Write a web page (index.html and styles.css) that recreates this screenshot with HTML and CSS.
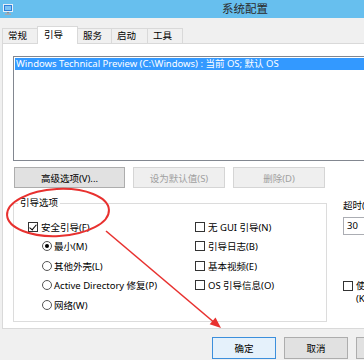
FILE: index.html
```html
<!DOCTYPE html>
<html lang="zh-CN">
<head>
    <meta charset="UTF-8" />
    <title>系统配置</title>
    <link rel="stylesheet" href="styles.css">
</head>
<body>
    <div class="window">
        <div class="titlebar">
            <svg class="app_icon" viewBox="0 0 10 11">
                <rect x="0.5" y="0.5" width="9" height="7" fill="#2f7fd8" stroke="#e8eef6" />
                <rect x="2" y="2" width="6" height="4" fill="#7cc3f5" />
                <rect x="4" y="8" width="2" height="1.5" fill="#8a8f96" />
                <rect x="2" y="9.5" width="6" height="1.5" fill="#a4a9b0" />
            </svg>
            <span class="title">系统配置</span>
        </div>

        <div class="tabs">
            <div class="tab w35">常规</div>
            <div class="tab active">引导</div>
            <div class="tab w34">服务</div>
            <div class="tab w36">启动</div>
            <div class="tab w35">工具</div>
        </div>

        <div class="panel">
            <div class="listbox">
                <div class="list_item selected">Windows Technical Preview (C:\Windows) : 当前 OS; 默认 OS</div>
            </div>

            <div class="button_row">
                <button class="btn btn_wide">高级选项(V)...</button>
                <button class="btn" disabled>设为默认值(S)</button>
                <button class="btn" disabled>删除(D)</button>
            </div>

            <div class="lower">
                <fieldset class="group">
                    <legend>引导选项</legend>
                    <div class="group_cols">
                        <div class="col">
                            <div class="row"><span class="check checked"></span>安全引导(F)</div>
                            <div class="row sub"><span class="radio on"></span>最小(M)</div>
                            <div class="row sub"><span class="radio"></span>其他外壳(L)</div>
                            <div class="row sub"><span class="radio"></span>Active Directory 修复(P)</div>
                            <div class="row sub"><span class="radio"></span>网络(W)</div>
                        </div>
                        <div class="col col_right">
                            <div class="row"><span class="check"></span>无 GUI 引导(N)</div>
                            <div class="row"><span class="check"></span>引导日志(B)</div>
                            <div class="row"><span class="check"></span>基本视频(E)</div>
                            <div class="row"><span class="check"></span>OS 引导信息(O)</div>
                        </div>
                    </div>
                </fieldset>

                <div class="side">
                    <div class="side_label">超时(T):</div>
                    <div class="timeout">
                        <span class="input">30</span>
                        <span>秒</span>
                    </div>
                    <div class="perm">
                        <span class="check"></span>
                        <span>使所有引导设置成为永久设置<br>(K)</span>
                    </div>
                </div>
            </div>
        </div>

        <div class="footer">
            <button class="btn btn_foot btn_default">确定</button>
            <button class="btn btn_foot">取消</button>
            <button class="btn btn_foot">应用(A)</button>
            <button class="btn btn_foot">帮助</button>
        </div>

        <!-- red annotation drawn over the dialog -->
        <svg class="annot" width="364" height="360" viewBox="0 0 364 360">
            <ellipse cx="58" cy="212.5" rx="51" ry="23.5" transform="rotate(-3 58 212.5)" fill="none" stroke="#e8312f" stroke-width="2" />
            <line x1="106" y1="231" x2="216" y2="324" stroke="#e8312f" stroke-width="1.6" />
            <polygon points="221,328 209.7,324.3 215.5,317.5" fill="#e8312f" />
        </svg>
    </div>
</body>
</html>
```

FILE: styles.css
```css
/* reset */
* {
    margin: 0;
    padding: 0;
    box-sizing: border-box;
}

body {
    width: 364px;
    height: 360px;
    overflow: hidden;
    background: #f0f0f0;
    font-family: "Noto Sans", "Noto Sans CJK SC", sans-serif;
    font-size: 9.5px;
    color: #000;
}

.window {
    position: relative;
    width: 500px;
}

/* title bar */
.titlebar {
    height: 18px;
    background: #67bfee;
    display: flex;
    align-items: center;
    padding-left: 3px;
}

.app_icon {
    width: 10px;
    height: 11px;
}

.title {
    flex: 1;
    text-align: center;
    font-size: 11.5px;
    line-height: 18px;
    color: #2b2b2b;
    padding-right: 23px;
}

/* tabs */
.tabs {
    display: flex;
    align-items: flex-end;
    height: 25px;
    padding-left: 2px;
}

.tab {
    height: 15px;
    border: 1px solid #d9d9d9;
    border-bottom: none;
    background: #f0f0f0;
    margin-right: -1px;
    line-height: 14px;
    padding-left: 5px;
}

.tab.w34 { width: 35px; }
.tab.w35 { width: 36px; }
.tab.w36 { width: 37px; }

.tab.active {
    width: 41px;
    height: 18px;
    background: #fff;
    margin-bottom: -1px;
    position: relative;
    z-index: 1;
    line-height: 15px;
    padding-left: 6px;
}

/* tab page */
.panel {
    margin: 0 2px;
    height: 286px;
    background: #fff;
    border: 1px solid #d9d9d9;
    padding: 12px 0 0 10px;
}

.listbox {
    width: 480px;
    height: 105px;
    border: 1px solid #828790;
    padding: 1px;
}

.list_item {
    height: 12px;
    line-height: 12px;
    padding-left: 1px;
    white-space: nowrap;
}

.list_item.selected {
    background: #3399ff;
    color: #fff;
}

.button_row {
    display: flex;
    gap: 8px;
    margin-top: 6px;
    padding-left: 1px;
}

.btn {
    height: 21px;
    width: 92px;
    border: 1px solid #adadad;
    background: #e1e1e1;
    font-family: inherit;
    font-size: 9.5px;
    color: #000;
}

.btn_wide {
    width: 111px;
}

.btn:disabled {
    border-color: #d5d5d5;
    background: #efefef;
    color: #a0a0a0;
}

/* boot options */
.lower {
    display: flex;
    margin-top: 8px;
}

.group {
    width: 314px;
    flex-shrink: 0;
    border: 1px solid #dcdcdc;
    padding: 7px 0 6px 4px;
    min-width: 0;
}

.group legend {
    padding: 0 2px;
    line-height: 14px;
}

.group_cols {
    display: flex;
}

.col {
    width: 177px;
    flex-shrink: 0;
    padding-left: 10px;
}

.col_right {
    width: auto;
    flex: 1;
    padding-left: 0;
}

.row {
    height: 19.5px;
    display: flex;
    align-items: center;
    gap: 3px;
    white-space: nowrap;
}

.row.sub {
    padding-left: 14px;
    gap: 2px;
}

.check {
    width: 10px;
    height: 10px;
    border: 1px solid #333;
    background: #fff;
    display: flex;
    justify-content: center;
    flex-shrink: 0;
}

.check.checked::after {
    content: '';
    width: 3px;
    height: 6px;
    border-right: 1.5px solid #000;
    border-bottom: 1.5px solid #000;
    transform: rotate(40deg);
}

.radio {
    width: 10px;
    height: 10px;
    border: 1px solid #555;
    border-radius: 50%;
    background: #fff;
    display: flex;
    justify-content: center;
    align-items: center;
    flex-shrink: 0;
}

.radio.on::after {
    content: '';
    width: 4px;
    height: 4px;
    border-radius: 50%;
    background: #000;
}

/* timeout column */
.side {
    margin-left: 16px;
    padding-top: 3px;
}

.side_label {
    line-height: 13px;
}

.timeout {
    display: flex;
    align-items: center;
    gap: 5px;
    margin-top: 5px;
}

.timeout .input {
    width: 56px;
    height: 18px;
    border: 1px solid #abadb3;
    background: #fff;
    line-height: 16px;
    padding-left: 3px;
}

.perm {
    display: flex;
    gap: 3px;
    margin-top: 44px;
    line-height: 13px;
}

.perm .check {
    margin-top: 2px;
}

/* dialog buttons */
.footer {
    display: flex;
    justify-content: flex-end;
    gap: 8px;
    padding: 8px 8px 0 0;
}

.btn_foot {
    width: 64px;
    height: 22px;
}

.btn_default {
    border-color: #3c8fdc;
    background: #e5f1fb;
}

.annot {
    position: absolute;
    top: 0;
    left: 0;
    pointer-events: none;
}
```
